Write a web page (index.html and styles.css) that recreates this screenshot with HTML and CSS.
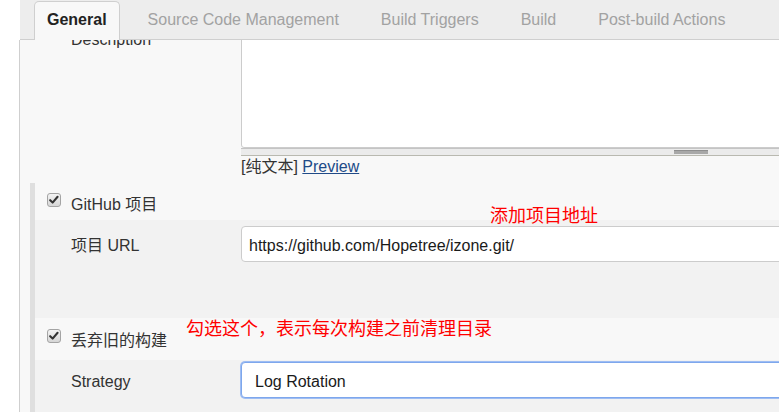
FILE: index.html
```html
<!DOCTYPE html>
<html lang="zh">
<head>
<meta charset="utf-8">
<title>Jenkins config</title>
<link rel="stylesheet" href="styles.css">
</head>
<body>
<div class="app">
  <div class="tabbar">
    <div class="tab active">General</div>
    <div class="tab">Source Code Management</div>
    <div class="tab">Build Triggers</div>
    <div class="tab">Build</div>
    <div class="tab">Post-build Actions</div>
  </div>
  <div class="content">
    <div class="desc-row">
      <div class="label">Description</div>
      <div class="field">
        <div class="textarea"></div>
        <div class="resize"><span class="grip"></span></div>
        <div class="preview">[纯文本] <a href="#" class="link">Preview</a></div>
      </div>
    </div>
    <div class="sections">
      <div class="sec-head sec-head-1">
        <span class="checkbox"><svg viewBox="0 0 14 14" width="12" height="12"><path d="M2.5 7.2 L5.4 10 L11.2 3.2" fill="none" stroke="#333" stroke-width="2.4" stroke-linecap="round" stroke-linejoin="round"/></svg></span>
        <span class="sec-label">GitHub 项目</span>
      </div>
      <div class="nested nested-1">
        <div class="label">项目 URL</div>
        <div class="input">https://github.com/Hopetree/izone.git/</div>
      </div>
      <div class="sec-head sec-head-2">
        <span class="checkbox"><svg viewBox="0 0 14 14" width="12" height="12"><path d="M2.5 7.2 L5.4 10 L11.2 3.2" fill="none" stroke="#333" stroke-width="2.4" stroke-linecap="round" stroke-linejoin="round"/></svg></span>
        <span class="sec-label">丢弃旧的构建</span>
      </div>
      <div class="nested nested-2">
        <div class="label">Strategy</div>
        <div class="input select">Log Rotation</div>
      </div>
    </div>
  </div>
</div>
<div class="note note-1">添加项目地址</div>
<div class="note note-2">勾选这个，表示每次构建之前清理目录</div>
</body>
</html>
```
FILE: styles.css
```css
html, body {
  margin: 0;
  padding: 0;
}
body {
  width: 779px;
  height: 412px;
  overflow: hidden;
  background: #fff;
  font-family: "Liberation Sans", "Noto Sans CJK SC", sans-serif;
  font-size: 16px;
  color: #333;
  position: relative;
}
.app {
  margin-left: 19px;
  width: 900px;
}
.tabbar {
  height: 39px;
  background: #ededed;
  border-bottom: 1px solid #cfcfcf;
  margin-left: 1px;
  display: flex;
  align-items: flex-end;
  padding-left: 14px;
  gap: 14px;
}
.tab {
  box-sizing: border-box;
  padding: 8px 13px 0 13px;
  border: 1px solid transparent;
  border-bottom: none;
  line-height: 20px;
  color: #a2a2a2;
  white-space: nowrap;
  margin-bottom: -1px;
  height: 39px;
}
.tab.active {
  padding: 8px 12px 0 12px;
  color: #222;
  font-weight: bold;
  background: #f8f8f8;
  border-color: #cfcfcf;
  border-radius: 5px 5px 0 0;
}
.content {
  height: 372px;
  overflow: hidden;
  background: #f8f8f8;
  border-left: 1px solid #cfcfcf;
}
.desc-row {
  display: grid;
  grid-template-columns: 170px 600px;
  padding-left: 51px;
  margin-top: -12px;
}
.label {
  line-height: 20px;
  padding-top: 2px;
  color: #333;
}
.textarea {
  height: 120px;
  box-sizing: border-box;
  background: #fff;
  border: 1px solid #cccccc;
  border-radius: 0 0 0 3px;
}
.resize {
  height: 8px;
  box-sizing: border-box;
  background: #ebebeb;
  border-top: 1px solid #c4c4c4;
  border-bottom: 1px solid #b9b9b0;
  position: relative;
}
.grip {
  position: absolute;
  left: 433px;
  top: 1px;
  width: 34px;
  height: 4px;
  background: #a8a8a8;
  border-top: 1px solid #8e8e8e;
  box-sizing: border-box;
}
.preview {
  line-height: 20px;
  padding-top: 1px;
  color: #333;
}
.link {
  color: #204a87;
  text-decoration: underline;
}
.sections {
  margin: 6px 0 0 10px;
  border-left: 5px solid #dfdfdf;
}
.sec-head {
  display: flex;
  align-items: flex-start;
  padding-left: 12px;
  gap: 10px;
}
.sec-head-1 {
  padding-top: 10px;
  height: 27px;
}
.sec-head-2 {
  padding-top: 11px;
  height: 31px;
}
.sec-label {
  line-height: 20px;
  padding-top: 2px;
  color: #333;
}
.checkbox {
  width: 14px;
  height: 14px;
  box-sizing: border-box;
  border: 1px solid #a4a4a4;
  border-radius: 3px;
  background: linear-gradient(#f4f4f4, #d6d6d6);
  display: flex;
  align-items: center;
  justify-content: center;
}
.nested {
  background: #f2f2f2;
  display: grid;
  grid-template-columns: 170px 600px;
  padding-left: 36px;
  align-items: center;
}
.nested .label {
  padding-top: 3px;
}
.nested-1 {
  padding-top: 6px;
  padding-bottom: 56px;
}
.nested-2 {
  padding-top: 2px;
  padding-bottom: 20px;
}
.input {
  height: 36px;
  box-sizing: border-box;
  background: #fff;
  border: 1px solid #cccccc;
  border-radius: 4px;
  padding-left: 7px;
  padding-top: 3px;
  line-height: 31px;
  color: #1a1a1a;
}
.select {
  padding-left: 13px;
  border-color: #7ea7ec;
  box-shadow: 0 0 0 1px #9ebdf3;
}
.note {
  position: absolute;
  color: #ff0000;
  font-family: "Noto Sans CJK SC", sans-serif;
  font-size: 18px;
  line-height: 18px;
  white-space: nowrap;
}
.note-1 {
  left: 490px;
  top: 205px;
}
.note-2 {
  left: 186px;
  top: 318px;
}
```
